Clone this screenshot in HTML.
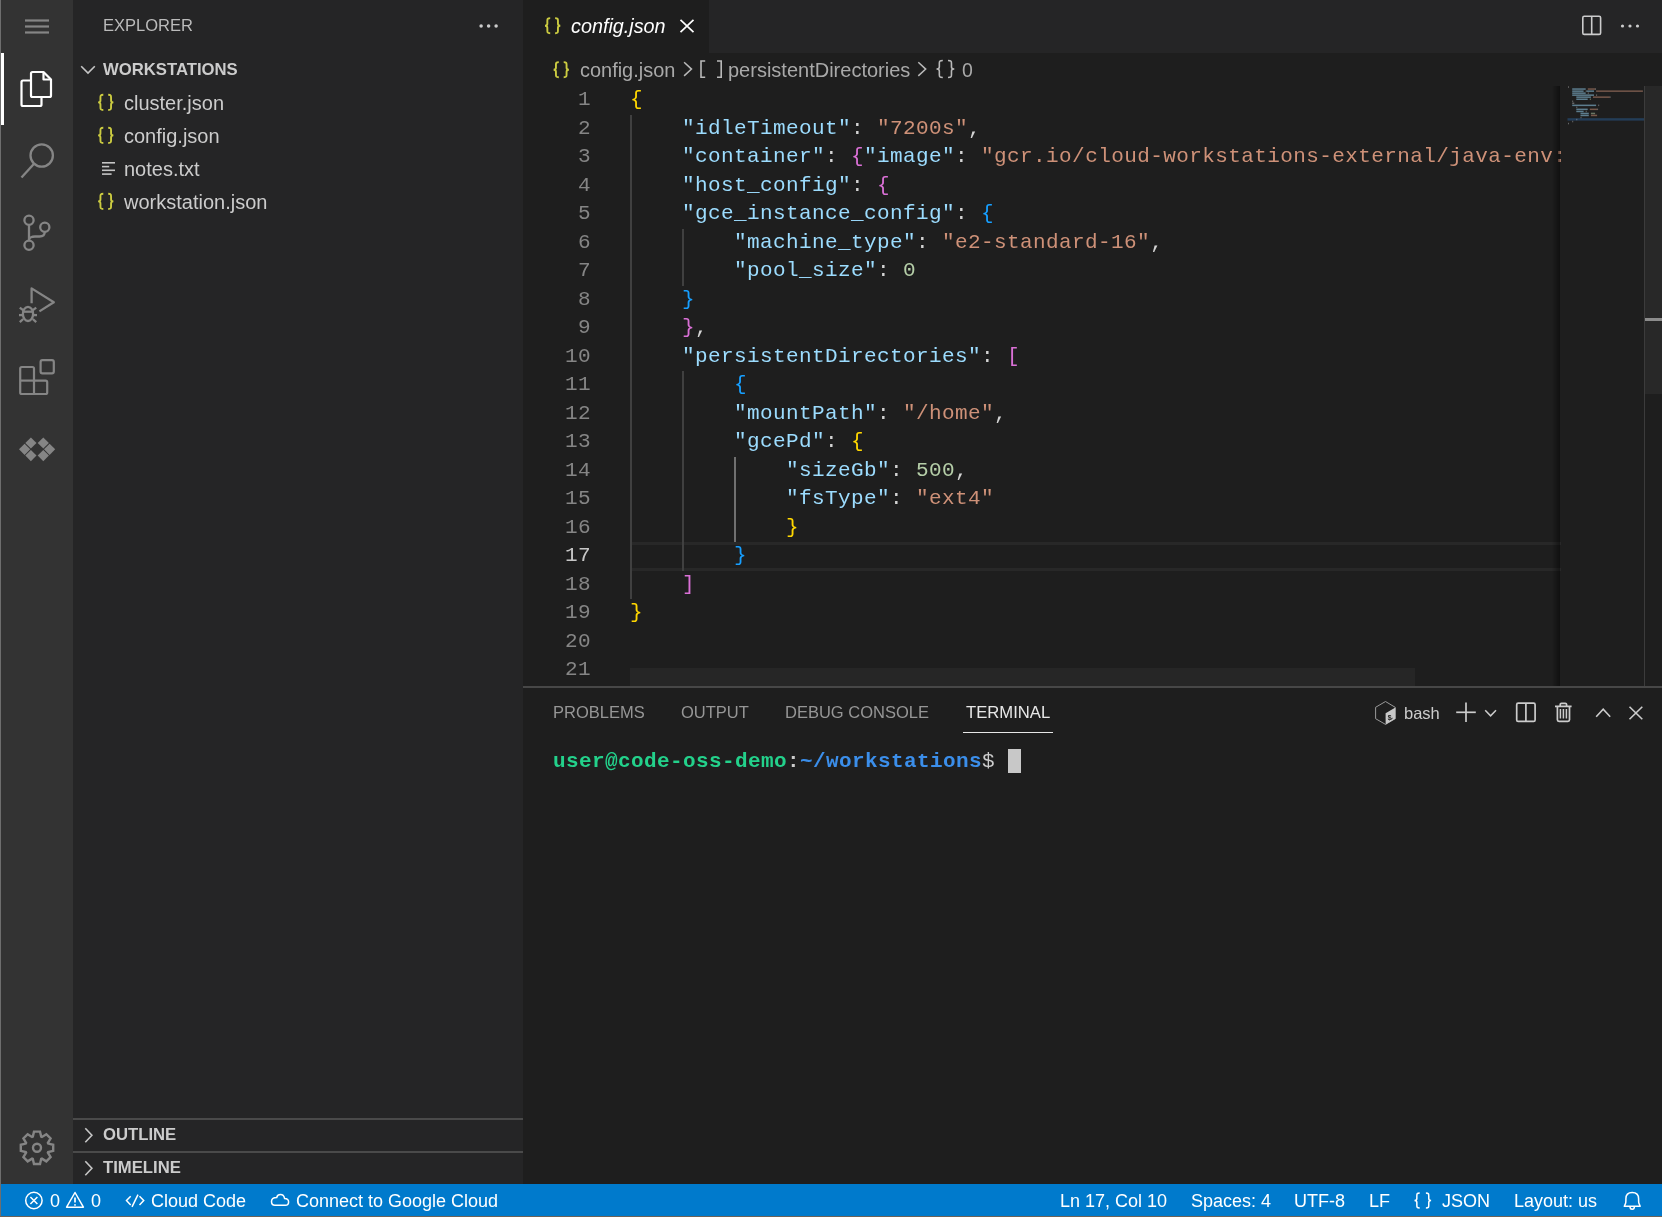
<!DOCTYPE html>
<html><head><meta charset="utf-8">
<style>
*{margin:0;padding:0;box-sizing:border-box}
html,body{width:1662px;height:1217px;overflow:hidden;background:#1e1e1e;font-family:"Liberation Sans",sans-serif}
.t{-webkit-font-smoothing:antialiased;will-change:transform}
.a{position:absolute}
.t{position:absolute;white-space:pre;line-height:1}
svg{position:absolute;overflow:visible}
.k{color:#9cdcfe}.s{color:#ce9178}.n{color:#b5cea8}.y{color:#ffd700}.p{color:#da70d6}.b{color:#179fff}
b{font-weight:bold}
</style></head>
<body>
<div class="a" style="left:0px;top:0px;width:1px;height:1217px;background:#6e6e6e;"></div>
<div class="a" style="left:1px;top:0px;width:72px;height:1184px;background:#333333;"></div>
<div class="a" style="left:73px;top:0px;width:450px;height:1184px;background:#252526;"></div>
<div class="a" style="left:523px;top:0px;width:1139px;height:53px;background:#252526;"></div>
<div class="a" style="left:523px;top:0px;width:186px;height:53px;background:#1e1e1e;"></div>
<div class="a" style="left:523px;top:53px;width:1139px;height:1131px;background:#1e1e1e;"></div>
<div class="a" style="left:1px;top:1184px;width:1661px;height:32px;background:#007acc;"></div>
<div class="a" style="left:0px;top:1216px;width:1662px;height:1px;background:#6b6258;"></div>
<div class="t " style="left:103.40px;top:17.23px;font-size:16.5px;color:#bbbbbb">EXPLORER</div>
<div class="t " style="left:103.00px;top:62.16px;font-size:16.7px;color:#cccccc;font-weight:bold">WORKSTATIONS</div>
<div class="t " style="left:123.80px;top:93.07px;font-size:20px;color:#cccccc">cluster.json</div>
<div class="t " style="left:123.80px;top:126.07px;font-size:20px;color:#cccccc">config.json</div>
<div class="t " style="left:123.80px;top:159.07px;font-size:20px;color:#cccccc">notes.txt</div>
<div class="t " style="left:123.80px;top:192.07px;font-size:20px;color:#cccccc">workstation.json</div>
<div class="a" style="left:73px;top:1118px;width:450px;height:1.5px;background:#4a4a4a;"></div>
<div class="a" style="left:73px;top:1151px;width:450px;height:1.5px;background:#4a4a4a;"></div>
<div class="t " style="left:103.20px;top:1127.06px;font-size:16.7px;color:#cccccc;font-weight:bold">OUTLINE</div>
<div class="t " style="left:103.20px;top:1160.06px;font-size:16.7px;color:#cccccc;font-weight:bold">TIMELINE</div>
<div class="t " style="left:571.00px;top:16.84px;font-size:19.8px;color:#ffffff;font-style:italic">config.json</div>
<div class="t " style="left:580.20px;top:60.51px;font-size:19.95px;color:#a9a9a9">config.json</div>
<div class="t " style="left:728.00px;top:60.47px;font-size:20px;color:#a9a9a9">persistentDirectories</div>
<div class="t " style="left:962.00px;top:60.89px;font-size:19.5px;color:#a9a9a9">0</div>
<div class="a" style="left:631.5px;top:542px;width:929px;height:29px;border:3px solid #282828;border-right:none;border-left:none"></div>
<div class="a" style="left:630.0px;top:114.5px;width:1.5px;height:484.5px;background:#404040;"></div>
<div class="a" style="left:682.0px;top:228.5px;width:1.5px;height:57.0px;background:#404040;"></div>
<div class="a" style="left:682.0px;top:371.0px;width:1.5px;height:199.5px;background:#404040;"></div>
<div class="a" style="left:734.0px;top:456.5px;width:1.5px;height:85.5px;background:#707070;"></div>
<div class="t " style="left:577.50px;top:89.21px;font-size:21px;font-family:'Liberation Mono',monospace;color:#858585;letter-spacing:0.4px">1</div>
<div class="t " style="left:630.20px;top:89.21px;font-size:21px;font-family:'Liberation Mono',monospace;color:#d4d4d4;overflow:hidden;width:930.5px;letter-spacing:0.4px"><span class="y">{</span></div>
<div class="t " style="left:577.50px;top:117.71px;font-size:21px;font-family:'Liberation Mono',monospace;color:#858585;letter-spacing:0.4px">2</div>
<div class="t " style="left:630.20px;top:117.71px;font-size:21px;font-family:'Liberation Mono',monospace;color:#d4d4d4;overflow:hidden;width:930.5px;letter-spacing:0.4px">    <span class="k">"idleTimeout"</span>: <span class="s">"7200s"</span>,</div>
<div class="t " style="left:577.50px;top:146.21px;font-size:21px;font-family:'Liberation Mono',monospace;color:#858585;letter-spacing:0.4px">3</div>
<div class="t " style="left:630.20px;top:146.21px;font-size:21px;font-family:'Liberation Mono',monospace;color:#d4d4d4;overflow:hidden;width:930.5px;letter-spacing:0.4px">    <span class="k">"container"</span>: <span class="p">{</span><span class="k">"image"</span>: <span class="s">"gcr.io/cloud-workstations-external/java-env:</span></div>
<div class="t " style="left:577.50px;top:174.71px;font-size:21px;font-family:'Liberation Mono',monospace;color:#858585;letter-spacing:0.4px">4</div>
<div class="t " style="left:630.20px;top:174.71px;font-size:21px;font-family:'Liberation Mono',monospace;color:#d4d4d4;overflow:hidden;width:930.5px;letter-spacing:0.4px">    <span class="k">"host_config"</span>: <span class="p">{</span></div>
<div class="t " style="left:577.50px;top:203.21px;font-size:21px;font-family:'Liberation Mono',monospace;color:#858585;letter-spacing:0.4px">5</div>
<div class="t " style="left:630.20px;top:203.21px;font-size:21px;font-family:'Liberation Mono',monospace;color:#d4d4d4;overflow:hidden;width:930.5px;letter-spacing:0.4px">    <span class="k">"gce_instance_config"</span>: <span class="b">{</span></div>
<div class="t " style="left:577.50px;top:231.71px;font-size:21px;font-family:'Liberation Mono',monospace;color:#858585;letter-spacing:0.4px">6</div>
<div class="t " style="left:630.20px;top:231.71px;font-size:21px;font-family:'Liberation Mono',monospace;color:#d4d4d4;overflow:hidden;width:930.5px;letter-spacing:0.4px">        <span class="k">"machine_type"</span>: <span class="s">"e2-standard-16"</span>,</div>
<div class="t " style="left:577.50px;top:260.21px;font-size:21px;font-family:'Liberation Mono',monospace;color:#858585;letter-spacing:0.4px">7</div>
<div class="t " style="left:630.20px;top:260.21px;font-size:21px;font-family:'Liberation Mono',monospace;color:#d4d4d4;overflow:hidden;width:930.5px;letter-spacing:0.4px">        <span class="k">"pool_size"</span>: <span class="n">0</span></div>
<div class="t " style="left:577.50px;top:288.71px;font-size:21px;font-family:'Liberation Mono',monospace;color:#858585;letter-spacing:0.4px">8</div>
<div class="t " style="left:630.20px;top:288.71px;font-size:21px;font-family:'Liberation Mono',monospace;color:#d4d4d4;overflow:hidden;width:930.5px;letter-spacing:0.4px">    <span class="b">}</span></div>
<div class="t " style="left:577.50px;top:317.21px;font-size:21px;font-family:'Liberation Mono',monospace;color:#858585;letter-spacing:0.4px">9</div>
<div class="t " style="left:630.20px;top:317.21px;font-size:21px;font-family:'Liberation Mono',monospace;color:#d4d4d4;overflow:hidden;width:930.5px;letter-spacing:0.4px">    <span class="p">}</span>,</div>
<div class="t " style="left:564.50px;top:345.71px;font-size:21px;font-family:'Liberation Mono',monospace;color:#858585;letter-spacing:0.4px">10</div>
<div class="t " style="left:630.20px;top:345.71px;font-size:21px;font-family:'Liberation Mono',monospace;color:#d4d4d4;overflow:hidden;width:930.5px;letter-spacing:0.4px">    <span class="k">"persistentDirectories"</span>: <span class="p">[</span></div>
<div class="t " style="left:564.50px;top:374.21px;font-size:21px;font-family:'Liberation Mono',monospace;color:#858585;letter-spacing:0.4px">11</div>
<div class="t " style="left:630.20px;top:374.21px;font-size:21px;font-family:'Liberation Mono',monospace;color:#d4d4d4;overflow:hidden;width:930.5px;letter-spacing:0.4px">        <span class="b">{</span></div>
<div class="t " style="left:564.50px;top:402.71px;font-size:21px;font-family:'Liberation Mono',monospace;color:#858585;letter-spacing:0.4px">12</div>
<div class="t " style="left:630.20px;top:402.71px;font-size:21px;font-family:'Liberation Mono',monospace;color:#d4d4d4;overflow:hidden;width:930.5px;letter-spacing:0.4px">        <span class="k">"mountPath"</span>: <span class="s">"/home"</span>,</div>
<div class="t " style="left:564.50px;top:431.21px;font-size:21px;font-family:'Liberation Mono',monospace;color:#858585;letter-spacing:0.4px">13</div>
<div class="t " style="left:630.20px;top:431.21px;font-size:21px;font-family:'Liberation Mono',monospace;color:#d4d4d4;overflow:hidden;width:930.5px;letter-spacing:0.4px">        <span class="k">"gcePd"</span>: <span class="y">{</span></div>
<div class="t " style="left:564.50px;top:459.71px;font-size:21px;font-family:'Liberation Mono',monospace;color:#858585;letter-spacing:0.4px">14</div>
<div class="t " style="left:630.20px;top:459.71px;font-size:21px;font-family:'Liberation Mono',monospace;color:#d4d4d4;overflow:hidden;width:930.5px;letter-spacing:0.4px">            <span class="k">"sizeGb"</span>: <span class="n">500</span>,</div>
<div class="t " style="left:564.50px;top:488.21px;font-size:21px;font-family:'Liberation Mono',monospace;color:#858585;letter-spacing:0.4px">15</div>
<div class="t " style="left:630.20px;top:488.21px;font-size:21px;font-family:'Liberation Mono',monospace;color:#d4d4d4;overflow:hidden;width:930.5px;letter-spacing:0.4px">            <span class="k">"fsType"</span>: <span class="s">"ext4"</span></div>
<div class="t " style="left:564.50px;top:516.71px;font-size:21px;font-family:'Liberation Mono',monospace;color:#858585;letter-spacing:0.4px">16</div>
<div class="t " style="left:630.20px;top:516.71px;font-size:21px;font-family:'Liberation Mono',monospace;color:#d4d4d4;overflow:hidden;width:930.5px;letter-spacing:0.4px">            <span class="y">}</span></div>
<div class="t " style="left:564.50px;top:545.21px;font-size:21px;font-family:'Liberation Mono',monospace;color:#c6c6c6;letter-spacing:0.4px">17</div>
<div class="t " style="left:630.20px;top:545.21px;font-size:21px;font-family:'Liberation Mono',monospace;color:#d4d4d4;overflow:hidden;width:930.5px;letter-spacing:0.4px">        <span class="b">}</span></div>
<div class="t " style="left:564.50px;top:573.71px;font-size:21px;font-family:'Liberation Mono',monospace;color:#858585;letter-spacing:0.4px">18</div>
<div class="t " style="left:630.20px;top:573.71px;font-size:21px;font-family:'Liberation Mono',monospace;color:#d4d4d4;overflow:hidden;width:930.5px;letter-spacing:0.4px">    <span class="p">]</span></div>
<div class="t " style="left:564.50px;top:602.21px;font-size:21px;font-family:'Liberation Mono',monospace;color:#858585;letter-spacing:0.4px">19</div>
<div class="t " style="left:630.20px;top:602.21px;font-size:21px;font-family:'Liberation Mono',monospace;color:#d4d4d4;overflow:hidden;width:930.5px;letter-spacing:0.4px"><span class="y">}</span></div>
<div class="t " style="left:564.50px;top:630.71px;font-size:21px;font-family:'Liberation Mono',monospace;color:#858585;letter-spacing:0.4px">20</div>
<div class="t " style="left:564.50px;top:659.21px;font-size:21px;font-family:'Liberation Mono',monospace;color:#858585;letter-spacing:0.4px">21</div>
<div class="a" style="left:630px;top:668px;width:785px;height:18px;background:rgba(121,121,121,0.1);"></div>
<div class="a" style="left:1552px;top:86px;width:8px;height:601px;background:linear-gradient(to right,rgba(0,0,0,0),rgba(0,0,0,0.45))"></div>
<div class="a" style="left:1644px;top:86px;width:1px;height:601px;background:#3c3c3c;"></div>
<div class="a" style="left:1645px;top:86px;width:17px;height:308px;background:#282828;"></div>
<div class="a" style="left:1645px;top:318px;width:17px;height:3px;background:#8c8c8c;"></div>
<div class="a" style="left:523px;top:686px;width:1139px;height:1.5px;background:#474747;"></div>
<div class="t " style="left:553.30px;top:704.23px;font-size:16.5px;color:#969696">PROBLEMS</div>
<div class="t " style="left:681.30px;top:704.23px;font-size:16.5px;color:#969696">OUTPUT</div>
<div class="t " style="left:785.00px;top:704.23px;font-size:16.5px;color:#969696">DEBUG CONSOLE</div>
<div class="t " style="left:965.50px;top:704.80px;font-size:16.65px;color:#e7e7e7">TERMINAL</div>
<div class="a" style="left:963px;top:732px;width:90px;height:1.2px;background:#e7e7e7;"></div>
<div class="t " style="left:1403.70px;top:705.23px;font-size:16.5px;color:#cccccc">bash</div>
<div class="t " style="left:553.00px;top:750.91px;font-size:21px;font-family:'Liberation Mono',monospace;letter-spacing:0.4px"><b style="color:#23d18b">user@code-oss-demo</b><b style="color:#cccccc">:</b><b style="color:#3b8eea">~/workstations</b><span style="color:#cccccc">$ </span></div>
<div class="a" style="left:1008px;top:749px;width:13px;height:24px;background:#c8c8c8;"></div>
<div class="t " style="left:50.00px;top:1191.56px;font-size:18px;color:#ffffff">0</div>
<div class="t " style="left:91.00px;top:1191.56px;font-size:18px;color:#ffffff">0</div>
<div class="t " style="left:151.00px;top:1191.56px;font-size:18px;color:#ffffff">Cloud Code</div>
<div class="t " style="left:296.00px;top:1191.56px;font-size:18px;color:#ffffff">Connect to Google Cloud</div>
<div class="t " style="left:1059.50px;top:1191.56px;font-size:18px;color:#ffffff">Ln 17, Col 10</div>
<div class="t " style="left:1190.50px;top:1191.56px;font-size:18px;color:#ffffff">Spaces: 4</div>
<div class="t " style="left:1294.00px;top:1191.56px;font-size:18px;color:#ffffff">UTF-8</div>
<div class="t " style="left:1369.00px;top:1191.56px;font-size:18px;color:#ffffff">LF</div>
<div class="t " style="left:1441.50px;top:1191.56px;font-size:18px;color:#ffffff">JSON</div>
<div class="t " style="left:1513.50px;top:1191.56px;font-size:18px;color:#ffffff">Layout: us</div>
<svg class="a" style="left:0;top:0" width="1662" height="1217" viewBox="0 0 1662 1217"><line x1="25" y1="20.5" x2="49" y2="20.5" stroke="#858585" stroke-width="2.2"/><line x1="25" y1="26.5" x2="49" y2="26.5" stroke="#858585" stroke-width="2.2"/><line x1="25" y1="32.5" x2="49" y2="32.5" stroke="#858585" stroke-width="2.2"/><rect x="1" y="53" width="3" height="72" fill="#ffffff"/><g fill="none" stroke="#ffffff" stroke-width="2.2" stroke-linejoin="round"><path d="M30 80.5 H23 Q21.5 80.5 21.5 82 V104.5 Q21.5 106 23 106 H40 Q41.5 106 41.5 104.5 V98"/><path d="M32.5 72 H43.5 L51 79.5 V95.5 Q51 97 49.5 97 H32.5 Q31 97 31 95.5 V73.5 Q31 72 32.5 72 Z"/><path d="M43.5 72 V79.5 H51"/></g><g fill="none" stroke="#858585" stroke-width="2.3"><circle cx="41.7" cy="155.5" r="11.2"/><line x1="21.5" y1="177.5" x2="33.8" y2="164"/></g><g fill="none" stroke="#858585" stroke-width="2.3"><circle cx="29" cy="220.3" r="4.6"/><circle cx="44.8" cy="227.2" r="4.6"/><circle cx="29" cy="245.3" r="4.6"/><line x1="29" y1="225" x2="29" y2="240.7"/><path d="M44.8 231.8 C44.8 235.5 42.5 236.5 39.5 236.5 H35 C31.5 236.5 29 238 29 240"/></g><g fill="none" stroke="#858585" stroke-width="2.3" stroke-linejoin="round"><path d="M31.6 303.2 V288.4 L53.8 302.3 L39.4 311.4"/><ellipse cx="28" cy="313.9" rx="5.1" ry="7.1"/><line x1="22.9" y1="311.7" x2="33.1" y2="311.7"/><line x1="19" y1="315.1" x2="22.9" y2="315.1"/><line x1="33.1" y1="315.1" x2="37" y2="315.1"/><line x1="19.8" y1="307.6" x2="23.4" y2="310.4"/><line x1="36.2" y1="307.6" x2="32.6" y2="310.4"/><line x1="19.8" y1="322.2" x2="23.2" y2="319"/><line x1="36.2" y1="322.2" x2="32.8" y2="319"/></g><g fill="none" stroke="#858585" stroke-width="2.2" stroke-linejoin="round"><rect x="40.6" y="360.2" width="13.2" height="13.2" rx="1.8"/><path d="M21.8 367 H32.4 Q34 367 34 368.6 V380.6 H45.6 Q47.2 380.6 47.2 382.2 V392.4 Q47.2 394 45.6 394 H21.8 Q20.2 394 20.2 392.4 V368.6 Q20.2 367 21.8 367 Z"/><line x1="20.2" y1="380.6" x2="34" y2="380.6"/><line x1="34" y1="380.6" x2="34" y2="394"/></g><path d="M24.6 443.7 L30.200000000000003 449.3 L24.6 454.90000000000003 L19.0 449.3 Z" fill="#858585"/><path d="M30.9 437.4 L36.5 443 L30.9 448.6 L25.299999999999997 443 Z" fill="#858585"/><path d="M30.9 450.0 L36.5 455.6 L30.9 461.20000000000005 L25.299999999999997 455.6 Z" fill="#858585"/><path d="M43.3 437.4 L48.9 443 L43.3 448.6 L37.699999999999996 443 Z" fill="#858585"/><path d="M43.3 450.0 L48.9 455.6 L43.3 461.20000000000005 L37.699999999999996 455.6 Z" fill="#858585"/><path d="M49.6 443.7 L55.2 449.3 L49.6 454.90000000000003 L44.0 449.3 Z" fill="#858585"/><path d="M32.80 1136.60 L34.00 1131.60 L40.00 1131.60 L41.20 1136.60 L41.95 1136.91 L46.33 1134.22 L50.58 1138.47 L47.89 1142.85 L48.20 1143.60 L53.20 1144.80 L53.20 1150.80 L48.20 1152.00 L47.89 1152.75 L50.58 1157.13 L46.33 1161.38 L41.95 1158.69 L41.20 1159.00 L40.00 1164.00 L34.00 1164.00 L32.80 1159.00 L32.05 1158.69 L27.67 1161.38 L23.42 1157.13 L26.11 1152.75 L25.80 1152.00 L20.80 1150.80 L20.80 1144.80 L25.80 1143.60 L26.11 1142.85 L23.42 1138.47 L27.67 1134.22 L32.05 1136.91 Z" fill="none" stroke="#858585" stroke-width="2.4" stroke-linejoin="miter"/><circle cx="37" cy="1147.8" r="4" fill="none" stroke="#858585" stroke-width="2.4"/><circle cx="481.1" cy="26" r="1.75" fill="#cccccc"/><circle cx="488.6" cy="26" r="1.75" fill="#cccccc"/><circle cx="496.1" cy="26" r="1.75" fill="#cccccc"/><path d="M81.2 66.2 L88 73 L94.8 66.2" fill="none" stroke="#c5c5c5" stroke-width="1.6"/><path d="M85.3 1128.2 L91.9 1135.2 L85.3 1142.2" fill="none" stroke="#c5c5c5" stroke-width="1.6"/><path d="M85.3 1161.2 L91.9 1168.2 L85.3 1175.2" fill="none" stroke="#c5c5c5" stroke-width="1.6"/><path d="M103.3 94.8 C100.44 94.8 100.44 95.8 100.44 97.8 V100.39999999999999 C100.44 101.8 99.64 102.39999999999999 98.1 102.39999999999999 C99.64 102.39999999999999 100.44 102.99999999999999 100.44 104.39999999999999 V107.0 C100.44 109.0 100.44 110.0 103.3 110.0" fill="none" stroke="#cbcb41" stroke-width="1.9"/><path d="M108.2 94.8 C111.06 94.8 111.06 95.8 111.06 97.8 V100.39999999999999 C111.06 101.8 111.86 102.39999999999999 113.4 102.39999999999999 C111.86 102.39999999999999 111.06 102.99999999999999 111.06 104.39999999999999 V107.0 C111.06 109.0 111.06 110.0 108.2 110.0" fill="none" stroke="#cbcb41" stroke-width="1.9"/><path d="M103.3 127.8 C100.44 127.8 100.44 128.8 100.44 130.8 V133.4 C100.44 134.8 99.64 135.4 98.1 135.4 C99.64 135.4 100.44 136.0 100.44 137.4 V140.0 C100.44 142.0 100.44 143.0 103.3 143.0" fill="none" stroke="#cbcb41" stroke-width="1.9"/><path d="M108.2 127.8 C111.06 127.8 111.06 128.8 111.06 130.8 V133.4 C111.06 134.8 111.86 135.4 113.4 135.4 C111.86 135.4 111.06 136.0 111.06 137.4 V140.0 C111.06 142.0 111.06 143.0 108.2 143.0" fill="none" stroke="#cbcb41" stroke-width="1.9"/><g stroke="#c5c5c5" stroke-width="1.6"><line x1="102" y1="162.8" x2="115" y2="162.8"/><line x1="102" y1="166.6" x2="109.2" y2="166.6"/><line x1="102" y1="170.3" x2="115" y2="170.3"/><line x1="102" y1="174.1" x2="111.6" y2="174.1"/></g><path d="M103.3 193.8 C100.44 193.8 100.44 194.8 100.44 196.8 V199.4 C100.44 200.8 99.64 201.4 98.1 201.4 C99.64 201.4 100.44 202.0 100.44 203.4 V206.0 C100.44 208.0 100.44 209.0 103.3 209.0" fill="none" stroke="#cbcb41" stroke-width="1.9"/><path d="M108.2 193.8 C111.06 193.8 111.06 194.8 111.06 196.8 V199.4 C111.06 200.8 111.86 201.4 113.4 201.4 C111.86 201.4 111.06 202.0 111.06 203.4 V206.0 C111.06 208.0 111.06 209.0 108.2 209.0" fill="none" stroke="#cbcb41" stroke-width="1.9"/><path d="M550.2 18.1 C547.34 18.1 547.34 19.1 547.34 21.1 V23.700000000000003 C547.34 25.1 546.5400000000001 25.700000000000003 545 25.700000000000003 C546.5400000000001 25.700000000000003 547.34 26.300000000000004 547.34 27.700000000000003 V30.299999999999997 C547.34 32.3 547.34 33.3 550.2 33.3" fill="none" stroke="#cbcb41" stroke-width="1.9"/><path d="M555.1 18.1 C557.96 18.1 557.96 19.1 557.96 21.1 V23.700000000000003 C557.96 25.1 558.76 25.700000000000003 560.3000000000001 25.700000000000003 C558.76 25.700000000000003 557.96 26.300000000000004 557.96 27.700000000000003 V30.299999999999997 C557.96 32.3 557.96 33.3 555.1 33.3" fill="none" stroke="#cbcb41" stroke-width="1.9"/><path d="M680.5 19.8 L693.5 32.2 M693.5 19.8 L680.5 32.2" stroke="#ffffff" stroke-width="1.7"/><g fill="none" stroke="#cccccc" stroke-width="1.6"><rect x="1582.8" y="16.2" width="17.8" height="18.2" rx="1.5"/><line x1="1591.7" y1="16.2" x2="1591.7" y2="34.4"/></g><circle cx="1622.5" cy="26" r="1.6" fill="#cccccc"/><circle cx="1630" cy="26" r="1.6" fill="#cccccc"/><circle cx="1637.5" cy="26" r="1.6" fill="#cccccc"/><path d="M558.8000000000001 62.1 C555.94 62.1 555.94 63.1 555.94 65.1 V67.7 C555.94 69.10000000000001 555.1400000000001 69.7 553.6 69.7 C555.1400000000001 69.7 555.94 70.3 555.94 71.7 V74.3 C555.94 76.3 555.94 77.3 558.8000000000001 77.3" fill="none" stroke="#cbcb41" stroke-width="1.9"/><path d="M563.7 62.1 C566.5600000000001 62.1 566.5600000000001 63.1 566.5600000000001 65.1 V67.7 C566.5600000000001 69.10000000000001 567.36 69.7 568.9000000000001 69.7 C567.36 69.7 566.5600000000001 70.3 566.5600000000001 71.7 V74.3 C566.5600000000001 76.3 566.5600000000001 77.3 563.7 77.3" fill="none" stroke="#cbcb41" stroke-width="1.9"/><path d="M684.1 62.3 L691.5 69.1 L684.1 75.9" fill="none" stroke="#b9b9b9" stroke-width="1.5"/><path d="M918.3 62.3 L925.6999999999999 69.1 L918.3 75.9" fill="none" stroke="#b9b9b9" stroke-width="1.5"/><path d="M705.2 61 H701 V77.3 H705.2 M717 61 H721.2 V77.3 H717" fill="none" stroke="#b9b9b9" stroke-width="1.6"/><path d="M942.8 60.5 C939.335 60.5 939.335 61.5 939.335 63.5 V67.0 C939.335 68.4 938.5350000000001 69.0 936.5 69.0 C938.5350000000001 69.0 939.335 69.6 939.335 71.0 V74.5 C939.335 76.5 939.335 77.5 942.8 77.5" fill="none" stroke="#b9b9b9" stroke-width="1.6"/><path d="M948.0 60.5 C951.465 60.5 951.465 61.5 951.465 63.5 V67.0 C951.465 68.4 952.265 69.0 954.3 69.0 C952.265 69.0 951.465 69.6 951.465 71.0 V74.5 C951.465 76.5 951.465 77.5 948.0 77.5" fill="none" stroke="#b9b9b9" stroke-width="1.6"/><rect x="1567.5" y="118.2" width="76.5" height="2.4" fill="#264f78" opacity="0.65"/><rect x="1568.0" y="86.3" width="1.0" height="1.5" fill="rgba(212,212,212,0.4)"/><rect x="1572.2" y="88.3" width="13.5" height="1.5" fill="rgba(156,220,254,0.5)"/><rect x="1587.8" y="88.3" width="7.3" height="1.5" fill="rgba(206,145,120,0.5)"/><rect x="1595.0" y="88.3" width="1.0" height="1.5" fill="rgba(212,212,212,0.4)"/><rect x="1572.2" y="90.4" width="11.4" height="1.5" fill="rgba(156,220,254,0.5)"/><rect x="1585.7" y="90.4" width="1.0" height="1.5" fill="rgba(212,212,212,0.4)"/><rect x="1586.7" y="90.4" width="7.3" height="1.5" fill="rgba(156,220,254,0.5)"/><rect x="1596.1" y="90.4" width="46.8" height="1.5" fill="rgba(206,145,120,0.5)"/><rect x="1572.2" y="92.4" width="13.5" height="1.5" fill="rgba(156,220,254,0.5)"/><rect x="1587.8" y="92.4" width="1.0" height="1.5" fill="rgba(212,212,212,0.4)"/><rect x="1572.2" y="94.4" width="21.8" height="1.5" fill="rgba(156,220,254,0.5)"/><rect x="1596.1" y="94.4" width="1.0" height="1.5" fill="rgba(212,212,212,0.4)"/><rect x="1576.3" y="96.4" width="14.6" height="1.5" fill="rgba(156,220,254,0.5)"/><rect x="1593.0" y="96.4" width="16.6" height="1.5" fill="rgba(206,145,120,0.5)"/><rect x="1609.6" y="96.4" width="1.0" height="1.5" fill="rgba(212,212,212,0.4)"/><rect x="1576.3" y="98.5" width="11.4" height="1.5" fill="rgba(156,220,254,0.5)"/><rect x="1589.8" y="98.5" width="1.0" height="1.5" fill="rgba(181,206,168,0.5)"/><rect x="1572.2" y="100.5" width="1.0" height="1.5" fill="rgba(212,212,212,0.4)"/><rect x="1572.2" y="102.5" width="2.1" height="1.5" fill="rgba(212,212,212,0.4)"/><rect x="1572.2" y="104.6" width="23.9" height="1.5" fill="rgba(156,220,254,0.5)"/><rect x="1598.2" y="104.6" width="1.0" height="1.5" fill="rgba(212,212,212,0.4)"/><rect x="1576.3" y="106.6" width="1.0" height="1.5" fill="rgba(212,212,212,0.4)"/><rect x="1576.3" y="108.6" width="11.4" height="1.5" fill="rgba(156,220,254,0.5)"/><rect x="1589.8" y="108.6" width="7.3" height="1.5" fill="rgba(206,145,120,0.5)"/><rect x="1597.1" y="108.6" width="1.0" height="1.5" fill="rgba(212,212,212,0.4)"/><rect x="1576.3" y="110.7" width="7.3" height="1.5" fill="rgba(156,220,254,0.5)"/><rect x="1585.7" y="110.7" width="1.0" height="1.5" fill="rgba(212,212,212,0.4)"/><rect x="1580.5" y="112.7" width="8.3" height="1.5" fill="rgba(156,220,254,0.5)"/><rect x="1590.9" y="112.7" width="4.2" height="1.5" fill="rgba(181,206,168,0.5)"/><rect x="1580.5" y="114.7" width="8.3" height="1.5" fill="rgba(156,220,254,0.5)"/><rect x="1590.9" y="114.7" width="6.2" height="1.5" fill="rgba(206,145,120,0.5)"/><rect x="1580.5" y="116.8" width="1.0" height="1.5" fill="rgba(212,212,212,0.4)"/><rect x="1576.3" y="118.8" width="1.0" height="1.5" fill="rgba(212,212,212,0.4)"/><rect x="1572.2" y="120.8" width="1.0" height="1.5" fill="rgba(212,212,212,0.4)"/><rect x="1568.0" y="122.8" width="1.0" height="1.5" fill="rgba(212,212,212,0.4)"/><g fill="none" stroke="#9a9a9a" stroke-width="1.0" stroke-linejoin="round"><path d="M1385.5 701.5 L1395.2 707.3 V718.7 L1385.5 724.4 L1375.6 718.7 V707.3 Z"/></g><path d="M1395.4 707.6 V718.7 L1385.6 724.4 V713.2 Z" fill="#c8c8c8"/><text x="1387.6" y="719.6" font-family="Liberation Mono" font-size="7" fill="#1e1e1e" font-weight="bold">$</text><line x1="1391" y1="719.2" x2="1392.6" y2="718.2" stroke="#1e1e1e" stroke-width="0.9"/><g stroke="#cccccc" stroke-width="1.7" fill="none"><line x1="1456.2" y1="712.3" x2="1475.8" y2="712.3"/><line x1="1466" y1="702.5" x2="1466" y2="722"/><path d="M1485.2 710.2 L1490.6 715.8 L1496 710.2" stroke-width="1.5"/><rect x="1516.7" y="703.2" width="18.4" height="18.2" rx="1.5"/><line x1="1525.9" y1="703.2" x2="1525.9" y2="721.4"/><path d="M1555 706.4 H1571.6 M1557.4 706.4 V719.8 Q1557.4 721.3 1559 721.3 H1567.9 Q1569.5 721.3 1569.5 719.8 V706.4 M1560.2 706.4 V704.6 Q1560.2 703.3 1561.5 703.3 H1565.3 Q1566.6 703.3 1566.6 704.6 V706.4"/><path d="M1560.4 709 V718.4 M1563.4 709 V718.4 M1566.4 709 V718.4" stroke-width="1.5"/><path d="M1596.2 716.8 L1603.2 709.2 L1610.2 716.8" stroke-width="1.6"/><path d="M1629.5 706.7 L1642.3 719.3 M1642.3 706.7 L1629.5 719.3" stroke-width="1.6"/></g><g fill="none" stroke="#ffffff" stroke-width="1.5"><circle cx="33.9" cy="1200.5" r="8.2"/><path d="M30.4 1197 L37.4 1204 M37.4 1197 L30.4 1204"/><path d="M75 1192.5 L83.4 1207.2 H66.6 Z" stroke-linejoin="round"/><path d="M130.7 1196.3 L126.5 1200.6 L130.7 1204.9 M139.5 1196.3 L143.7 1200.6 L139.5 1204.9 M138 1194.6 L132 1206.9"/><path d="M274.9 1205.2 H285.3 Q288.6 1205.2 288.6 1201.9 Q288.6 1198.7 284.6 1198.5 Q283.7 1194.6 280.5 1194.6 Q277.6 1194.6 276.7 1197.4 Q271.5 1197.4 271.5 1201.4 Q271.5 1205.2 274.9 1205.2 Z"/></g><line x1="75" y1="1197.6" x2="75" y2="1202.6" stroke="#ffffff" stroke-width="1.7"/><circle cx="75" cy="1204.9" r="0.9" fill="#ffffff"/><path d="M1419.7 1193 C1416.84 1193 1416.84 1194 1416.84 1196 V1198.5 C1416.84 1199.9 1416.04 1200.5 1414.5 1200.5 C1416.04 1200.5 1416.84 1201.1 1416.84 1202.5 V1205 C1416.84 1207 1416.84 1208 1419.7 1208" fill="none" stroke="#ffffff" stroke-width="1.5"/><path d="M1425.9 1193 C1428.76 1193 1428.76 1194 1428.76 1196 V1198.5 C1428.76 1199.9 1429.56 1200.5 1431.1000000000001 1200.5 C1429.56 1200.5 1428.76 1201.1 1428.76 1202.5 V1205 C1428.76 1207 1428.76 1208 1425.9 1208" fill="none" stroke="#ffffff" stroke-width="1.5"/><path d="M1624.3 1206.3 H1640.2 L1638.8 1203 Q1638.6 1201.5 1638.6 1200 V1198.8 Q1638.6 1192.5 1632.2 1192.5 Q1625.9 1192.5 1625.9 1198.8 V1200 Q1625.9 1201.5 1625.7 1203 Z M1630 1206.5 Q1630 1209.3 1632.2 1209.3 Q1634.4 1209.3 1634.4 1206.5" fill="none" stroke="#ffffff" stroke-width="1.5" stroke-linejoin="round"/></svg>
</body></html>
